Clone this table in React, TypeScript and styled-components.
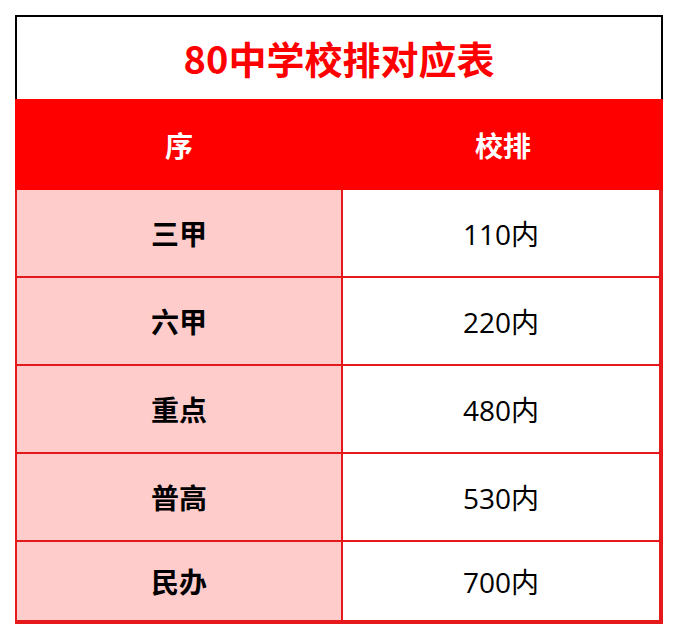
import React from "react";
import styled, { createGlobalStyle } from "styled-components";

const Global = createGlobalStyle`
  html, body { margin: 0; padding: 0; background: #ffffff; }
  body { font-family: "Noto Sans CJK SC", "Noto Sans", sans-serif; }
`;

const Page = styled.div`
  padding: 15px 0 0 15px;
`;

const Sheet = styled.div`
  width: 648px;
  display: flex;
  flex-direction: column;
`;

const TitleBar = styled.div`
  box-sizing: border-box;
  height: 84px;
  border: 2px solid #000;
  border-bottom: none;
  display: flex;
  align-items: center;
  justify-content: center;
  color: #ff0000;
  font-size: 38px;
  font-weight: 700;
  padding-bottom: 2px;
`;

const HeaderRow = styled.div`
  height: 91px;
  background: #ff0000;
  display: grid;
  grid-template-columns: 328px 1fr;
`;

const HeaderCell = styled.div`
  display: flex;
  align-items: center;
  justify-content: center;
  color: #ffffff;
  font-size: 28px;
  font-weight: 700;
`;

const Body = styled.div`
  border-left: 2px solid #e5191b;
  border-right: 4px solid #e5191b;
  border-bottom: 4px solid #e5191b;
  display: flex;
  flex-direction: column;
`;

const Row = styled.div<{ $last?: boolean }>`
  box-sizing: border-box;
  height: ${(p) => (p.$last ? "78px" : "88px")};
  border-bottom: ${(p) => (p.$last ? "none" : "2px solid #e5191b")};
  display: grid;
  grid-template-columns: 326px 1fr;
`;

const Cell = styled.div<{ $label?: boolean }>`
  box-sizing: border-box;
  display: flex;
  align-items: center;
  justify-content: center;
  font-size: 28px;
  color: #000;
  font-family: ${(p) =>
    p.$label
      ? `"Noto Sans CJK SC", sans-serif`
      : `"Open Sans", "Noto Sans CJK SC", sans-serif`};
  background: ${(p) => (p.$label ? "#ffcccc" : "#ffffff")};
  font-weight: ${(p) => (p.$label ? 700 : 400)};
  border-right: ${(p) => (p.$label ? "2px solid #e5191b" : "none")};
`;

const rows = [
  ["三甲", "110内"],
  ["六甲", "220内"],
  ["重点", "480内"],
  ["普高", "530内"],
  ["民办", "700内"],
];

export default function App() {
  return (
    <Page>
      <Global />
      <Sheet>
        <TitleBar>80中学校排对应表</TitleBar>
        <HeaderRow>
          <HeaderCell>序</HeaderCell>
          <HeaderCell>校排</HeaderCell>
        </HeaderRow>
        <Body>
          {rows.map(([a, b], i) => (
            <Row key={a} $last={i === rows.length - 1}>
              <Cell $label>{a}</Cell>
              <Cell>{b}</Cell>
            </Row>
          ))}
        </Body>
      </Sheet>
    </Page>
  );
}
